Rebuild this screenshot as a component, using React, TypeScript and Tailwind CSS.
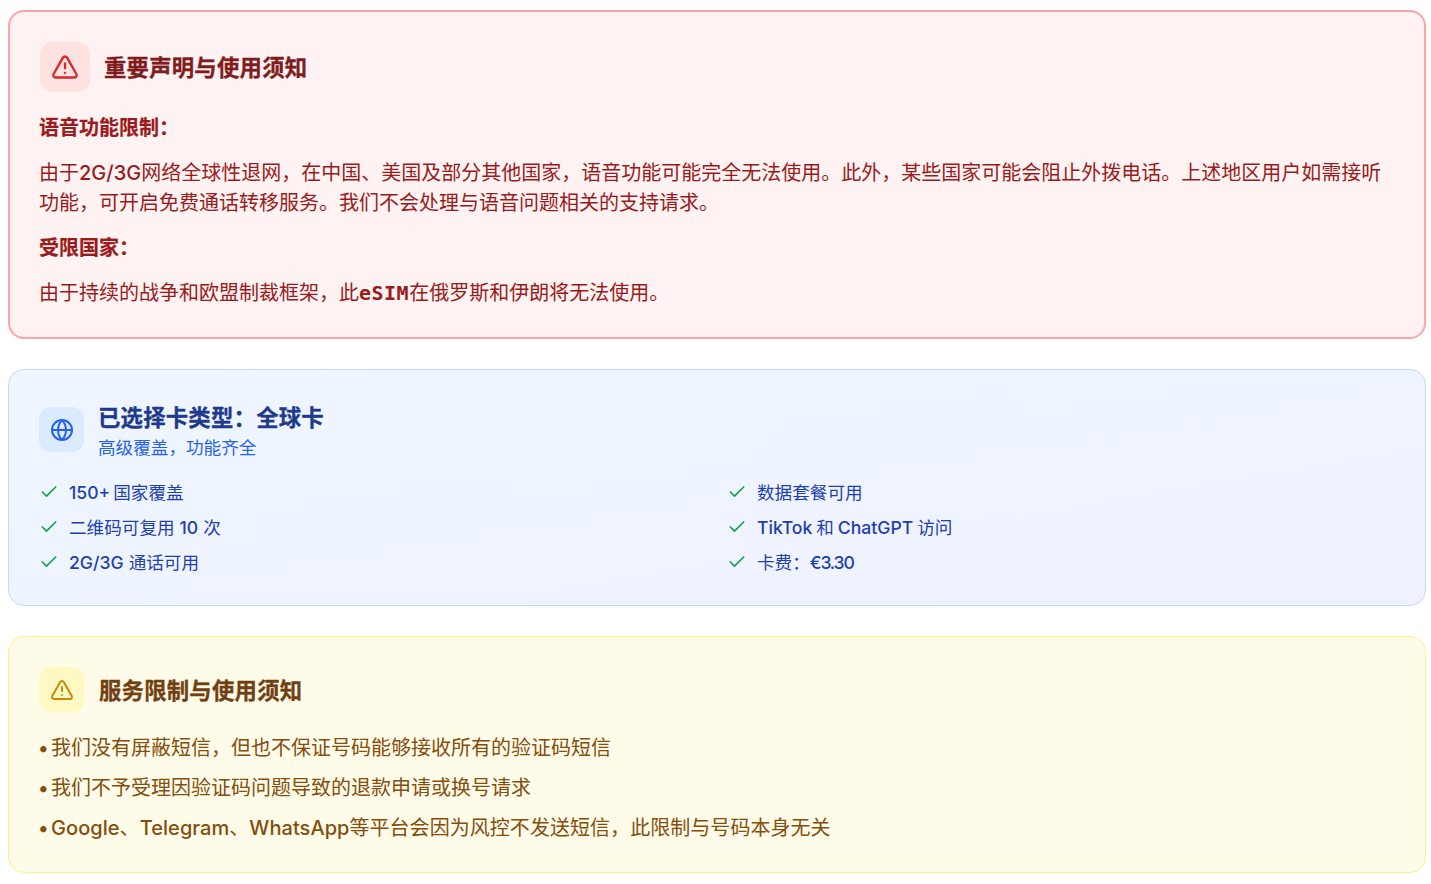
import React from 'react';
import { Check, Globe, TriangleAlert } from 'lucide-react';

// latin runs sit a bit heavier than the CJK around them
function L({ children }: { children: React.ReactNode }) {
  return <span className="font-medium">{children}</span>;
}

const featuresLeft = [
  <span className="[word-spacing:-2px]"><L>150+</L> 国家覆盖</span>,
  <>二维码可复用 <L>10</L> 次</>,
  <><L>2G/3G</L> 通话可用</>,
];
const featuresRight = [
  <>数据套餐可用</>,
  <span className="[word-spacing:-1px]"><L>TikTok</L> 和 <L>ChatGPT</L> 访问</span>,
  <>卡费：<span className="font-medium tracking-[-1.2px]">€3.30</span></>,
];
const notices = [
  <>我们没有屏蔽短信，但也不保证号码能够接收所有的验证码短信</>,
  <>我们不予受理因验证码问题导致的退款申请或换号请求</>,
  <span className="tracking-[0.05px]"><L>Google</L>、<L>Telegram</L>、<L>WhatsApp</L>等平台会因为风控不发送短信，此限制与号码本身无关</span>,
];

function Feature({ children }: { children: React.ReactNode }) {
  return (
    <div className="flex items-center gap-[10px] h-[25px] text-[17.6px] leading-[25px] text-[#1e40af]">
      <Check className="w-5 h-5 -mt-0.5 text-[#16a34a] shrink-0" />
      <span>{children}</span>
    </div>
  );
}

export default function App() {
  return (
    <div className="pl-2 pr-[5px] pt-[10px] pb-[11px] bg-white flex flex-col gap-[30px] font-['Inter','Noto_Sans_CJK_SC',sans-serif]">
      <section className="rounded-2xl border-2 border-[#fca5a5] bg-[#fef2f2] p-[30px] pb-[29px]">
        <div className="flex items-center gap-[15px] mb-[21px]">
          <div className="w-[50px] h-[50px] rounded-xl bg-[#fee2e2] flex items-center justify-center">
            <TriangleAlert className="w-7 h-7 text-[#dc2626]" />
          </div>
          <h2 className="text-[22.4px] pt-0.5 -ml-px tracking-[0.2px] [-webkit-text-stroke:0.3px] font-bold text-[#7f1d1d]">重要声明与使用须知</h2>
        </div>
        <div className="flex flex-col gap-[15px] -ml-px text-[20px] leading-[30px] text-[#991b1b]">
          <p className="font-bold [-webkit-text-stroke:0.2px]">语音功能限制：</p>
          <p>
            由于<L>2G/3G</L>网络全球性退网，在中国、美国及部分其他国家，语音功能可能完全无法使用。此外，某些国家可能会阻止外拨电话。上述地区用户如需接听功能，可开启免费通话转移服务。我们不会处理与语音问题相关的支持请求。
          </p>
          <p className="font-bold [-webkit-text-stroke:0.2px]">受限国家：</p>
          <p>
            由于持续的战争和欧盟制裁框架，此<span className="font-['DejaVu_Sans_Mono',monospace] font-bold tracking-[0.5px]">eSIM</span>在俄罗斯和伊朗将无法使用。
          </p>
        </div>
      </section>

      <section className="rounded-2xl border border-[#bfdbfe] bg-gradient-to-br from-[#eff6ff] to-[#eef2ff] p-[30px]">
        <div className="flex items-center gap-[15px] mb-[21px]">
          <div className="w-[45px] h-[45px] rounded-xl bg-[#dbeafe] flex items-center justify-center">
            <Globe className="w-6 h-6 text-[#2563eb]" />
          </div>
          <div className="-ml-px">
            <h2 className="text-[22.4px] leading-[36px] tracking-[0.2px] [-webkit-text-stroke:0.3px] font-bold text-[#1e3a8a]">已选择卡类型：全球卡</h2>
            <p className="text-[17.6px] leading-[23px] text-[#2563eb]">高级覆盖，功能齐全</p>
          </div>
        </div>
        <div className="grid grid-cols-2 gap-x-5 gap-y-[10px]">
          {featuresLeft.map((item, i) => (
            <React.Fragment key={i}>
              <Feature>{item}</Feature>
              <Feature>{featuresRight[i]}</Feature>
            </React.Fragment>
          ))}
        </div>
      </section>

      <section className="rounded-2xl border border-[#fef08a] bg-[#fefce8] p-[30px] pb-[29px]">
        <div className="flex items-center gap-[15px] mb-[21px]">
          <div className="w-[45px] h-[45px] rounded-xl bg-[#fef9c3] flex items-center justify-center">
            <TriangleAlert className="w-6 h-6 text-[#ca8a04]" />
          </div>
          <h2 className="text-[22.4px] pt-0.5 tracking-[0.2px] [-webkit-text-stroke:0.3px] font-bold text-[#713f12]">服务限制与使用须知</h2>
        </div>
        <div className="flex flex-col gap-[10px] text-[20px] leading-[30px] text-[#854d0e]">
          {notices.map((line, i) => (
            <p key={i}>
              <span className="inline-block w-[13px] -ml-[1px] font-medium">•</span>
              {line}
            </p>
          ))}
        </div>
      </section>
    </div>
  );
}
